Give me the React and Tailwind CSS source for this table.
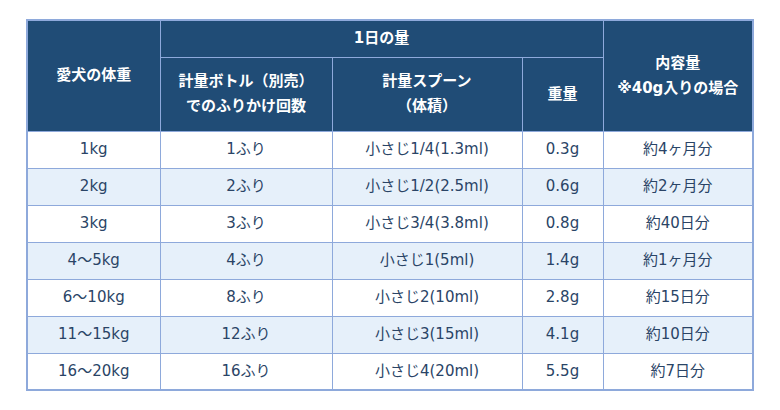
export default function App() {
  const rows = [
    ["1kg", "1ふり", "小さじ1/4(1.3ml)", "0.3g", "約4ヶ月分"],
    ["2kg", "2ふり", "小さじ1/2(2.5ml)", "0.6g", "約2ヶ月分"],
    ["3kg", "3ふり", "小さじ3/4(3.8ml)", "0.8g", "約40日分"],
    ["4〜5kg", "4ふり", "小さじ1(5ml)", "1.4g", "約1ヶ月分"],
    ["6〜10kg", "8ふり", "小さじ2(10ml)", "2.8g", "約15日分"],
    ["11〜15kg", "12ふり", "小さじ3(15ml)", "4.1g", "約10日分"],
    ["16〜20kg", "16ふり", "小さじ4(20ml)", "5.5g", "約7日分"],
  ];
  const th = "border border-[#8ea9db] bg-[#204c76] text-white font-bold text-[15px] text-center align-middle leading-[25px]";
  const td = "border border-[#8ea9db] text-center align-middle h-[37px] p-0";
  return (
    <div className="w-[780px] h-[410px] bg-white pt-[19px] pl-[26px]" style={{ fontFamily: '"DejaVu Sans", "Noto Sans CJK JP", sans-serif' }}>
      <table className="table-fixed border-collapse border-2 border-[#8ea9db] w-[726px] text-[15px] text-[#2a4466]">
        <colgroup>
          <col className="w-[133px]" />
          <col className="w-[172px]" />
          <col className="w-[190px]" />
          <col className="w-[81px]" />
          <col className="w-[150px]" />
        </colgroup>
        <thead>
          <tr className="h-[37px]">
            <th rowSpan={2} className={th}>愛犬の体重</th>
            <th colSpan={3} className={th}>1日の量</th>
            <th rowSpan={2} className={th}>内容量<br />※40g入りの場合</th>
          </tr>
          <tr className="h-[74px]">
            <th className={th}>計量ボトル（別売）<br />でのふりかけ回数</th>
            <th className={th}>計量スプーン<br />（体積）</th>
            <th className={th}>重量</th>
          </tr>
        </thead>
        <tbody>
          {rows.map((r, i) => (
            <tr key={i} className={i % 2 === 1 ? "bg-[#e6f0fa]" : "bg-white"}>
              {r.map((c, j) => (
                <td key={j} className={td}>{c}</td>
              ))}
            </tr>
          ))}
        </tbody>
      </table>
    </div>
  );
}
